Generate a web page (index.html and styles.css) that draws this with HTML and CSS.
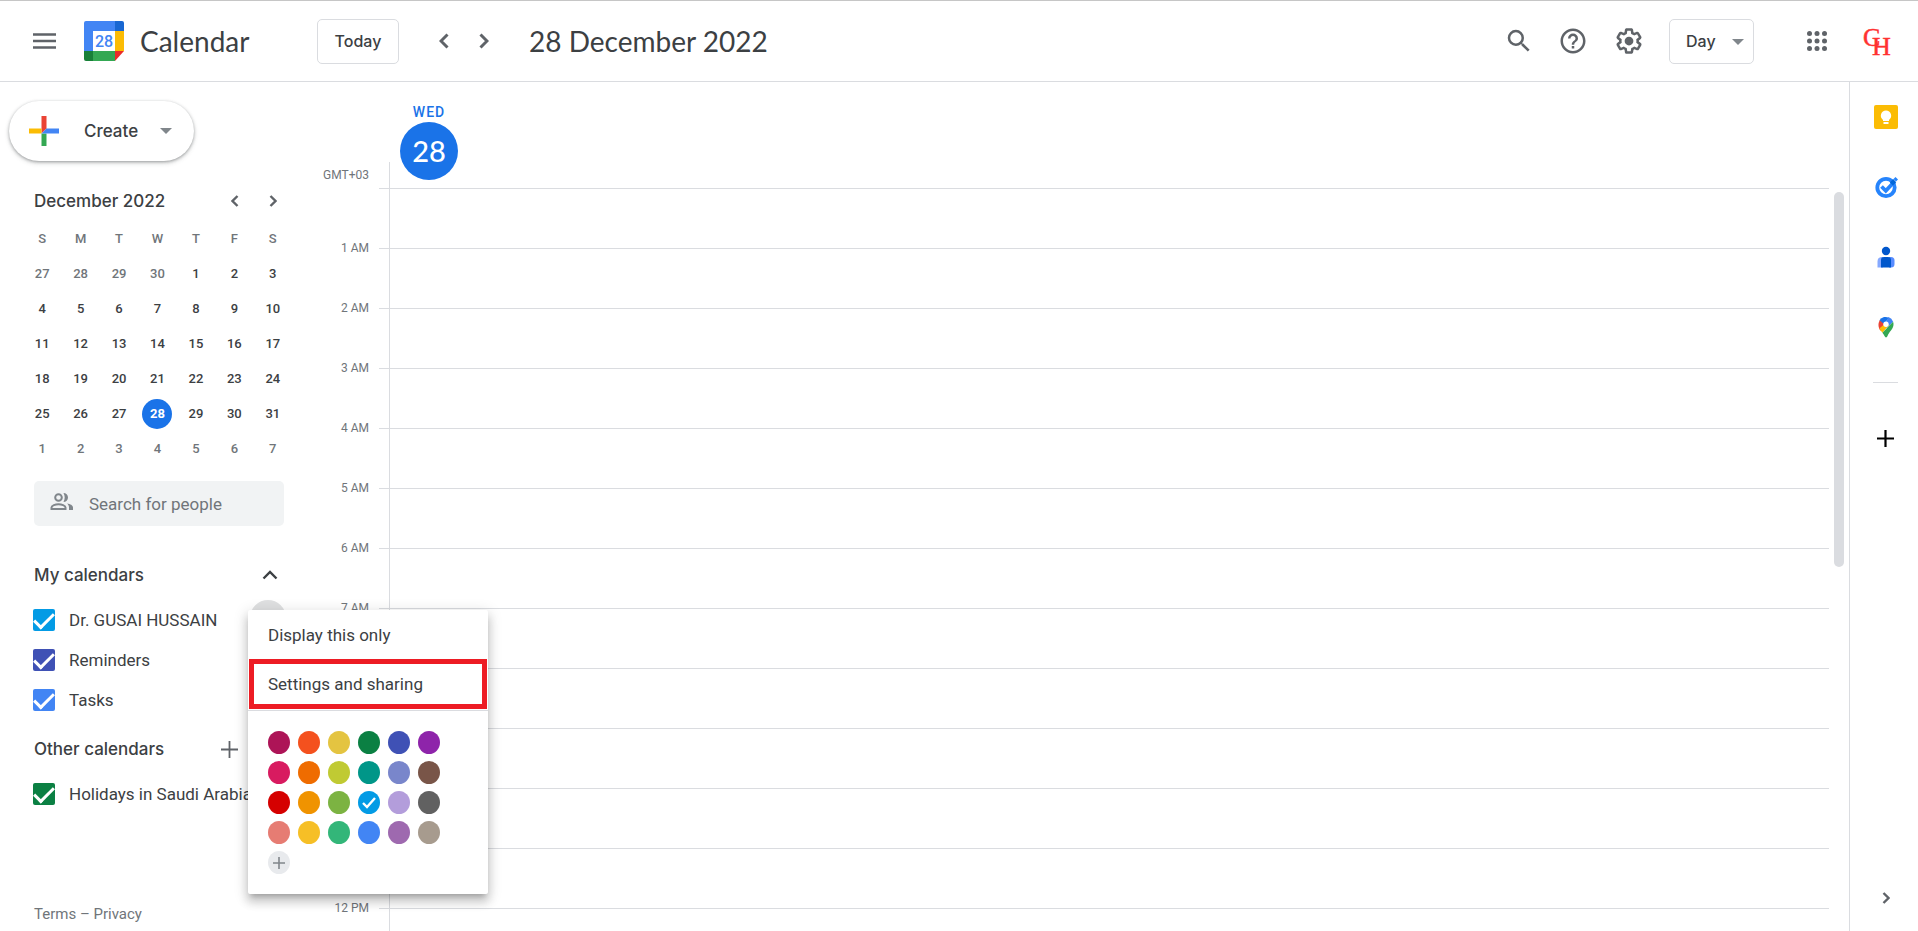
FILE: index.html
```html
<!DOCTYPE html>
<html lang="en" dir="ltr">
  <head>
    <meta charset="utf-8">
    <title>Calendar - 28 December 2022</title>
    <link rel="stylesheet" href="styles.css">
  </head>
  <body>
    <header class="topbar">
      <button class="icon-btn menu-btn" aria-label="Main menu">
        <svg width="24" height="16" viewBox="0 0 24 16"><path d="M0 1.500h23M0 8h23M0 14.500h23" stroke="#5f6368" stroke-width="2.400"/></svg>
      </button>
      <a class="brand" href="#">
        <svg class="logo" width="40" height="40" viewBox="0 0 40 40">
          <path d="M2 0h29v10H9v21H0V2a2 2 0 0 1 2-2z" fill="#4285f4"/>
          <path d="M31 0h7a2 2 0 0 1 2 2v8h-9z" fill="#1967d2"/>
          <path d="M31 10h9v20h-9z" fill="#fbbc04"/>
          <path d="M0 30h10v10H2a2 2 0 0 1-2-2z" fill="#188038"/>
          <path d="M9 30h22v10H9z" fill="#34a853"/>
          <path d="M31 30h9l-9 10z" fill="#ea2c28"/>
          <path d="M9 10h22v20H9z" fill="#fff"/>
          <text x="20" y="26" text-anchor="middle" class="logo-day">28</text>
        </svg>
        <span>Calendar</span>
      </a>
      <button class="box-btn today">Today</button>
      <div class="pager">
        <button class="icon-btn" aria-label="Previous day"><svg width="10" height="16" viewBox="0 0 10 16"><path d="M8.500 1.500L2 8l6.500 6.500" class="chev big"/></svg></button>
        <button class="icon-btn" aria-label="Next day"><svg width="10" height="16" viewBox="0 0 10 16"><path d="M1.500 1.500L8 8l-6.500 6.500" class="chev big"/></svg></button>
      </div>
      <h1 class="date">28 December 2022</h1>
      <div class="tools">
        <button class="icon-btn search-btn" aria-label="Search">
          <svg width="30" height="30" viewBox="0 0 24 24" fill="#5f6368"><path d="M15.500 14h-.79l-.28-.27A6.470 6.470 0 0 0 16 9.500 6.500 6.500 0 1 0 9.500 16c1.610 0 3.090-.59 4.230-1.570l.27.28v.79l5 4.990L20.490 19l-4.990-5zm-6 0a4.500 4.500 0 1 1 0-9 4.500 4.500 0 0 1 0 9z"/></svg>
        </button>
        <button class="icon-btn help-btn" aria-label="Help">
          <svg width="30" height="30" viewBox="0 0 24 24" fill="#5f6368"><path d="M11 18h2v-2h-2v2zm1-16C6.480 2 2 6.480 2 12s4.480 10 10 10 10-4.480 10-10S17.520 2 12 2zm0 18c-4.410 0-8-3.590-8-8s3.590-8 8-8 8 3.590 8 8-3.590 8-8 8zm0-14a4 4 0 0 0-4 4h2c0-1.100.9-2 2-2s2 .9 2 2c0 2-3 1.750-3 5h2c0-2.250 3-2.500 3-5a4 4 0 0 0-4-4z"/></svg>
        </button>
        <button class="icon-btn gear-btn" aria-label="Settings">
          <svg width="30" height="30" viewBox="0 0 24 24" fill="#5f6368"><path d="M13.850 22.250h-3.700c-.74 0-1.360-.54-1.450-1.270l-.27-1.890c-.27-.14-.53-.29-.79-.46l-1.800.72c-.7.26-1.470-.03-1.810-.65L2.200 15.530c-.35-.66-.2-1.440.36-1.880l1.530-1.190c-.01-.15-.02-.3-.02-.46 0-.15.010-.31.020-.46l-1.520-1.190c-.59-.45-.74-1.260-.37-1.880l1.850-3.190c.34-.62 1.110-.9 1.790-.63l1.810.73c.26-.17.52-.32.78-.46l.27-1.910c.09-.7.71-1.250 1.440-1.250h3.700c.74 0 1.360.54 1.450 1.270l.27 1.890c.27.14.53.29.79.46l1.800-.72c.71-.26 1.480.03 1.820.65l1.840 3.180c.36.66.2 1.440-.36 1.880l-1.520 1.190c.01.15.02.3.02.46s-.01.31-.02.46l1.520 1.190c.56.45.72 1.230.37 1.860l-1.860 3.220c-.34.62-1.110.9-1.800.63l-1.800-.72c-.26.17-.52.32-.78.46l-.27 1.910c-.1.680-.72 1.220-1.460 1.220zm-3.230-2h2.760l.37-2.550.53-.22c.44-.18.88-.44 1.340-.78l.45-.34 2.380.96 1.380-2.400-2.030-1.580.07-.56c.03-.26.06-.51.06-.78s-.03-.53-.06-.78l-.07-.56 2.030-1.580-1.390-2.400-2.390.96-.45-.35c-.42-.32-.87-.58-1.330-.77l-.52-.22-.37-2.550h-2.760l-.37 2.550-.53.210c-.44.190-.88.440-1.340.79l-.45.330-2.380-.95-1.390 2.390 2.030 1.580-.07.56a7 7 0 0 0-.06.79c0 .26.02.53.06.78l.07.56-2.030 1.580 1.380 2.400 2.390-.96.45.35c.43.330.86.580 1.330.77l.53.220.38 2.550z"/><circle cx="12" cy="12" r="3.500"/></svg>
        </button>
        <div class="view-pick">
          <select class="box-btn" aria-label="View">
            <option>Day</option>
            <option>Week</option>
            <option>Month</option>
          </select>
          <span class="caret"></span>
        </div>
        <button class="icon-btn apps-btn" aria-label="Google apps">
          <svg width="20" height="20" viewBox="0 0 20 20" fill="#5f6368"><circle cx="2.500" cy="2.500" r="2.500"/><circle cx="10" cy="2.500" r="2.500"/><circle cx="17.500" cy="2.500" r="2.500"/><circle cx="2.500" cy="10" r="2.500"/><circle cx="10" cy="10" r="2.500"/><circle cx="17.500" cy="10" r="2.500"/><circle cx="2.500" cy="17.500" r="2.500"/><circle cx="10" cy="17.500" r="2.500"/><circle cx="17.500" cy="17.500" r="2.500"/></svg>
        </button>
        <button class="icon-btn account-btn" aria-label="Account">
          <svg width="30" height="44" viewBox="0 0 30 44" class="monogram"><text x="0" y="27">C<tspan x="9" y="36">H</tspan></text></svg>
        </button>
      </div>
    </header>

    <div class="page">
      <aside class="sidebar">
        <button class="create">
          <svg width="30" height="30" viewBox="0 0 30 30"><path d="M12.500 0h5v12.500l-5 5z" fill="#ea4335"/><path d="M0 12.500h12.500v5H0z" fill="#fbbc04"/><path d="M12.500 17.500h5V30h-5z" fill="#34a853"/><path d="M17.500 12.500H30v5H12.500z" fill="#4285f4"/></svg>
          <span>Create</span>
          <span class="caret"></span>
        </button>

        <section class="mini">
          <div class="mini-head">
            <h2>December 2022</h2>
            <button class="icon-btn" aria-label="Previous month"><svg width="8" height="12" viewBox="0 0 8 12"><path d="M6.500 1L1.500 6l5 5" class="chev"/></svg></button>
            <button class="icon-btn" aria-label="Next month"><svg width="8" height="12" viewBox="0 0 8 12"><path d="M1.500 1l5 5-5 5" class="chev"/></svg></button>
          </div>
          <table>
            <thead>
              <tr><th>S</th><th>M</th><th>T</th><th>W</th><th>T</th><th>F</th><th>S</th></tr>
            </thead>
            <tbody>
              <tr><td class="out">27</td><td class="out">28</td><td class="out">29</td><td class="out">30</td><td>1</td><td>2</td><td>3</td></tr>
              <tr><td>4</td><td>5</td><td>6</td><td>7</td><td>8</td><td>9</td><td>10</td></tr>
              <tr><td>11</td><td>12</td><td>13</td><td>14</td><td>15</td><td>16</td><td>17</td></tr>
              <tr><td>18</td><td>19</td><td>20</td><td>21</td><td>22</td><td>23</td><td>24</td></tr>
              <tr><td>25</td><td>26</td><td>27</td><td><span class="now">28</span></td><td>29</td><td>30</td><td>31</td></tr>
              <tr><td class="out">1</td><td class="out">2</td><td class="out">3</td><td class="out">4</td><td class="out">5</td><td class="out">6</td><td class="out">7</td></tr>
            </tbody>
          </table>
        </section>

        <label class="people">
          <svg width="24" height="18" viewBox="0 0 24 18" fill="none" stroke="#80868b" stroke-width="2"><circle cx="8.500" cy="4.500" r="3.300"/><path d="M1.500 16v-1.500c0-2 4-3.200 7-3.200s7 1.200 7 3.200V16z"/><path d="M13.500 0a4.500 4.500 0 0 1 0 9c1.600-2.600 1.600-6.400 0-9zM17 10.500c3.400.5 6 1.800 6 4V17h-4v-2.500c0-1.700-.8-3-2-4z" fill="#80868b" stroke="none"/></svg>
          <input type="text" placeholder="Search for people" aria-label="Search for people">
        </label>

        <section class="calendars">
          <div class="cal-head">
            <h2>My calendars</h2>
            <button class="icon-btn" aria-label="Collapse"><svg width="16" height="10" viewBox="0 0 16 10"><path d="M1.500 8.500L8 2l6.500 6.500" class="chev dark"/></svg></button>
          </div>
          <ul>
            <li class="opened">
              <label><input type="checkbox" class="sky" checked>Dr. GUSAI HUSSAIN</label>
              <button class="more" aria-label="Options"></button>
              <div class="popup">
                <button class="item">Display this only</button>
                <button class="item marked">Settings and sharing</button>
                <div class="colors">
                  <button style="background:#ad1457" aria-label="Radicchio"></button>
                  <button style="background:#f4511e" aria-label="Tangerine"></button>
                  <button style="background:#e4c441" aria-label="Citron"></button>
                  <button style="background:#0b8043" aria-label="Basil"></button>
                  <button style="background:#3f51b5" aria-label="Blueberry"></button>
                  <button style="background:#8e24aa" aria-label="Grape"></button>
                  <button style="background:#d81b60" aria-label="Cherry blossom"></button>
                  <button style="background:#ef6c00" aria-label="Pumpkin"></button>
                  <button style="background:#c0ca33" aria-label="Avocado"></button>
                  <button style="background:#009688" aria-label="Eucalyptus"></button>
                  <button style="background:#7986cb" aria-label="Lavender"></button>
                  <button style="background:#795548" aria-label="Cocoa"></button>
                  <button style="background:#d50000" aria-label="Tomato"></button>
                  <button style="background:#f09300" aria-label="Mango"></button>
                  <button style="background:#7cb342" aria-label="Pistachio"></button>
                  <button style="background:#039be5" aria-label="Peacock"><svg width="14" height="12" viewBox="0 0 14 12"><path d="M1 6l4 4 8-9" fill="none" stroke="#fff" stroke-width="2.400"/></svg></button>
                  <button style="background:#b39ddb" aria-label="Wisteria"></button>
                  <button style="background:#616161" aria-label="Graphite"></button>
                  <button style="background:#e67c73" aria-label="Flamingo"></button>
                  <button style="background:#f6bf26" aria-label="Banana"></button>
                  <button style="background:#33b679" aria-label="Sage"></button>
                  <button style="background:#4285f4" aria-label="Cobalt"></button>
                  <button style="background:#9e69af" aria-label="Amethyst"></button>
                  <button style="background:#a79b8e" aria-label="Birch"></button>
                  <button class="custom" aria-label="Add custom color"><svg width="12" height="12" viewBox="0 0 12 12"><path d="M6 0v12M0 6h12" stroke="#80868b" stroke-width="1.600"/></svg></button>
                </div>
              </div>
            </li>
            <li><label><input type="checkbox" class="indigo" checked>Reminders</label></li>
            <li><label><input type="checkbox" class="blue" checked>Tasks</label></li>
          </ul>
          <div class="cal-head other">
            <h2>Other calendars</h2>
            <button class="icon-btn" aria-label="Add other calendars"><svg width="17" height="17" viewBox="0 0 17 17"><path d="M8.500 0v17M0 8.500h17" stroke="#5f6368" stroke-width="1.800"/></svg></button>
          </div>
          <ul>
            <li><label><input type="checkbox" class="green" checked>Holidays in Saudi Arabia</label></li>
          </ul>
        </section>

        <footer><a href="#">Terms</a> – <a href="#">Privacy</a></footer>
      </aside>

      <main class="day-view">
        <div class="day-head">
          <span class="zone">GMT+03</span>
          <div class="stub"></div>
          <div class="day">
            <span>WED</span>
            <strong>28</strong>
          </div>
        </div>
        <div class="scroller">
          <div class="hours">
            <div class="hour"><span></span><div></div></div>
            <div class="hour"><span>1 AM</span><div></div></div>
            <div class="hour"><span>2 AM</span><div></div></div>
            <div class="hour"><span>3 AM</span><div></div></div>
            <div class="hour"><span>4 AM</span><div></div></div>
            <div class="hour"><span>5 AM</span><div></div></div>
            <div class="hour"><span>6 AM</span><div></div></div>
            <div class="hour"><span>7 AM</span><div></div></div>
            <div class="hour"><span>8 AM</span><div></div></div>
            <div class="hour"><span>9 AM</span><div></div></div>
            <div class="hour"><span>10 AM</span><div></div></div>
            <div class="hour"><span>11 AM</span><div></div></div>
            <div class="hour"><span>12 PM</span><div></div></div>
          </div>
          <div class="track"><div class="thumb"></div></div>
        </div>
      </main>

      <nav class="rail">
        <a href="#" aria-label="Keep"><svg width="24" height="24" viewBox="0 0 24 24"><rect width="24" height="24" rx="2" fill="#fbbc04"/><path d="M12 5.500a5.200 5.200 0 0 0-3 9.400V16h6v-1.100a5.200 5.200 0 0 0-3-9.400zM9.500 17h5v2h-5z" fill="#fff"/></svg></a>
        <a href="#" aria-label="Tasks"><svg width="24" height="24" viewBox="0 0 24 24"><circle cx="12" cy="12.500" r="8.700" fill="none" stroke="#2684fc" stroke-width="3.800"/><path d="M7.500 11.500l4.300 4.300 8.500-9" fill="none" stroke="#2684fc" stroke-width="3.800"/><path d="M15.800 7.600l3.400-3.500 3 3.100-3.300 3.400z" fill="#0066da"/><path d="M19.500 4l2-2 2.500 2.500-2 2z" fill="#2684fc"/></svg></a>
        <a href="#" aria-label="Contacts"><svg width="24" height="24" viewBox="0 0 24 24"><circle cx="12" cy="6" r="4.200" fill="#0057cc"/><path d="M7.500 12H9v10.500H3.500v-6A4.500 4.500 0 0 1 7.500 12z" fill="#86a9ff"/><path d="M15 12h2a3.500 3.500 0 0 1 3.500 3.500V19a3.500 3.500 0 0 1-3.500 3.500h-2z" fill="#578cff"/><path d="M10 12h4a3 3 0 0 1 3 3v7.500H7V15a3 3 0 0 1 3-3z" fill="#0057cc"/></svg></a>
        <a href="#" aria-label="Maps"><svg width="24" height="24" viewBox="0 0 24 24"><path d="M6.200 4.400L12 9l-5.500 6.800C4.300 13 3.500 8 6.200 4.400z" fill="#ea4335"/><path d="M10 2a7.600 7.600 0 0 0-4.500 3.300L10 9l5-6.200A8 8 0 0 0 10 2z" fill="#1a73e8"/><path d="M14.500 2a7.800 7.800 0 0 1 4.600 4.700L13 13l-2-4.500z" fill="#4285f4"/><path d="M5.500 13.200c.6 1.500 1.700 3 2.900 4.500L15 10l-3-2z" fill="#fbbc04"/><path d="M19.100 6.700c1.700 5.200-2 8.300-4 11.200-1.600 2.300-1.600 4.100-3.100 4.600-1.200-.3-1.500-2.200-3.600-4.800z" fill="#34a853"/><circle cx="12" cy="9.200" r="2.700" fill="#fff"/></svg></a>
        <hr>
        <button class="icon-btn" aria-label="Get add-ons"><svg width="17" height="17" viewBox="0 0 17 17"><path d="M8.500 0v17M0 8.500h17" stroke="#000" stroke-width="2.200"/></svg></button>
        <button class="icon-btn hide-rail" aria-label="Hide side panel"><svg width="8" height="12" viewBox="0 0 8 12"><path d="M1.500 1l5 5-5 5" class="chev"/></svg></button>
      </nav>
    </div>
  </body>
</html>
```
FILE: styles.css
```css
*{
  box-sizing: border-box;
}
body{
  margin: 0;
  height: 100vh;
  display: flex;
  flex-direction: column;
  overflow: hidden;
  font: 17px/24px Roboto, sans-serif;
  color: #3c4043;
  background: #fff;
}
button{
  border: 0;
  padding: 0;
  background: none;
  font: inherit;
  color: inherit;
  cursor: pointer;
}
a{
  color: inherit;
  text-decoration: none;
}
h1, h2, ul{
  margin: 0;
  padding: 0;
  list-style: none;
}
svg{
  display: block;
}
.icon-btn{
  width: 40px;
  height: 40px;
  flex: none;
  display: flex;
  align-items: center;
  justify-content: center;
}
.chev{
  fill: none;
  stroke: #5f6368;
  stroke-width: 2.4;
}
.big{
  stroke-width: 3;
}
.dark{
  stroke: #3c4043;
}
.caret{
  width: 0;
  border: 6px solid transparent;
  border-top-color: #80868b;
  border-bottom: 0;
}

/* top bar */
.topbar{
  flex: none;
  height: 82px;
  display: flex;
  align-items: center;
  padding: 0 20px 0 25px;
  border-top: 1px solid #c6c6c6;
  border-bottom: 1px solid #dadce0;
}
.brand{
  display: flex;
  align-items: center;
  gap: 16px;
  width: 233px;
  margin-left: 19px;
  font: 28px/36px Lato, sans-serif;
}
.logo-day{
  font: 500 16px Roboto, sans-serif;
  fill: #4285f4;
}
.box-btn{
  height: 45px;
  border: 1px solid #dadce0;
  border-radius: 5px;
  background: #fff;
  font: 500 16px/24px Inter, sans-serif;
  color: #3c4043;
}
.today{
  width: 82px;
}
.pager{
  display: flex;
  margin-left: 25px;
}
.date{
  margin-left: 25px;
  font: 28px/36px Lato, sans-serif;
}
.tools{
  display: flex;
  align-items: center;
  margin-left: auto;
}
.help-btn{
  margin-left: 14px;
}
.gear-btn{
  margin: 0 20px 0 16px;
}
.view-pick{
  position: relative;
}
.view-pick select{
  appearance: none;
  width: 85px;
  padding: 0 16px;
}
.view-pick .caret{
  position: absolute;
  right: 10px;
  top: 20px;
  pointer-events: none;
}
.apps-btn{
  margin: 0 21px 0 43px;
}
.monogram text{
  font: 26px "Liberation Serif", serif;
  fill: #ff3131;
  stroke: #ff3131;
  stroke-width: .5;
}

.page{
  flex: 1;
  min-height: 0;
  display: flex;
}

/* left column */
.sidebar{
  flex: none;
  width: 309px;
  display: flex;
  flex-direction: column;
  padding: 19px 25px 0 34px;
}
.create{
  flex: none;
  align-self: flex-start;
  display: flex;
  align-items: center;
  height: 60px;
  width: 185px;
  margin-left: -25px;
  padding: 0 22px 0 20px;
  border-radius: 30px;
  box-shadow: 0 1px 3px rgba(60,64,67,.4), 0 2px 5px rgba(60,64,67,.2);
  font: 500 17px/24px Inter, sans-serif;
}
.create span:nth-child(2){
  margin: 0 auto 0 25px;
}
h2{
  font: 500 17px/24px Inter, sans-serif;
}
.mini-head{
  display: flex;
  align-items: center;
  margin: 20px -8px 0 0;
}
.mini-head h2{
  margin-right: auto;
}
.mini-head .icon-btn{
  width: 38px;
}
.mini table{
  table-layout: fixed;
  width: 269px;
  margin: 0 0 0 -11px;
  border-collapse: collapse;
}
.mini th, .mini td{
  height: 35px;
  padding: 0;
  text-align: center;
  font: 500 13px/20px Roboto, sans-serif;
}
.mini th, .mini .out{
  color: #70757a;
}
.now{
  display: block;
  width: 30px;
  margin: 0 auto;
  border-radius: 50%;
  background: #1a73e8;
  color: #fff;
  font-weight: 700;
  line-height: 30px;
}
.people{
  flex: none;
  display: flex;
  align-items: center;
  gap: 15px;
  height: 45px;
  margin-top: 15px;
  padding: 0 16px;
  border-radius: 5px;
  background: #f1f3f4;
}
.people svg{
  flex: none;
  margin-bottom: 4px;
}
.people input{
  width: 100%;
  min-width: 0;
  border: 0;
  padding: 0;
  outline: 0;
  background: none;
  font: inherit;
}
.people input::placeholder{
  color: #70757a;
  opacity: 1;
}
.cal-head{
  display: flex;
  align-items: center;
  justify-content: space-between;
  margin: 29px -6px 5px 0;
}
.cal-head.other{
  margin: 9px 35px 5px 0;
}
.calendars li{
  display: flex;
  height: 40px;
  align-items: center;
}
.calendars label{
  display: flex;
  align-items: center;
  white-space: nowrap;
}
.calendars input{
  appearance: none;
  width: 22px;
  height: 22px;
  margin: 0 14px 0 -1px;
  border-radius: 2px;
  display: flex;
  align-items: center;
  justify-content: center;
}
.calendars input::after{
  content: "";
  width: 17px;
  height: 8px;
  margin-bottom: 4px;
  border: solid #fff;
  border-width: 0 0 3px 3px;
  transform: rotate(-45deg);
}
.sky{
  background: #039be5;
}
.indigo{
  background: #3f51b5;
}
.blue{
  background: #4285f4;
}
.green{
  background: #0b8043;
}
.opened{
  position: relative;
}
.more{
  position: absolute;
  left: 216px;
  top: 0;
  width: 36px;
  height: 36px;
  border-radius: 50%;
  background: #dfe0e1;
}
footer{
  margin: auto 0 5px;
  font-size: 15px;
  color: #70757a;
}

/* options of one calendar, opens over the page */
.popup{
  position: absolute;
  z-index: 2;
  left: 214px;
  top: 10px;
  width: 240px;
  padding-bottom: 20px;
  border-radius: 2px;
  background: #fff;
  box-shadow: 0 8px 10px 1px rgba(0,0,0,.14), 0 3px 14px 2px rgba(0,0,0,.12), 0 5px 5px -3px rgba(0,0,0,.2);
}
.item{
  display: block;
  width: 100%;
  height: 49px;
  padding: 0 20px;
  text-align: left;
}
.item.marked{
  width: 238px;
  height: 50px;
  margin: 0 1px 1px;
  padding: 0 14px;
  border: 5px solid #ed1c24;
}
.colors{
  display: grid;
  grid-template-columns: repeat(6, 22px);
  gap: 7px 8px;
  padding: 20px 20px 0;
  border-top: 1px solid #dadce0;
}
.colors button{
  height: 23px;
  border-radius: 50%;
  display: flex;
  align-items: center;
  justify-content: center;
}
.colors .custom{
  background: #e8eaed;
}

/* day grid */
.day-view{
  flex: 1;
  min-width: 0;
  display: flex;
  flex-direction: column;
}
.day-head{
  flex: none;
  display: flex;
  align-items: flex-end;
  height: 106px;
}
.zone, .hour span{
  flex: none;
  width: 60px;
  margin-right: 10px;
  text-align: right;
  font-size: 12px;
  line-height: 16px;
  color: #70757a;
}
.zone{
  margin-bottom: 5px;
}
.stub{
  height: 26px;
  margin-left: 10px;
  border-left: 1px solid #dadce0;
}
.day{
  display: flex;
  flex-direction: column;
  width: 58px;
  margin: 0 0 8px 10px;
  text-align: center;
  color: #1a73e8;
}
.day span{
  font: 500 14px/20px Roboto, sans-serif;
  letter-spacing: 1px;
}
.day strong{
  border-radius: 50%;
  background: #1a73e8;
  color: #fff;
  font: 500 29px/58px Lato, sans-serif;
}
.scroller{
  flex: 1;
  min-height: 0;
  display: flex;
}
.hours{
  flex: 1;
}
.hour{
  display: flex;
  height: 60px;
}
.hour span{
  margin-top: -8px;
}
.hour div{
  flex: 1;
  padding-left: 10px;
  border-top: 1px solid #dadce0;
}
.hour div::before{
  content: "";
  display: block;
  height: 100%;
  border-left: 1px solid #dadce0;
}
.track{
  width: 20px;
  padding: 4px 5px;
}
.thumb{
  height: 51%;
  border-radius: 5px;
  background: #dadce0;
}

/* right rail */
.rail{
  flex: none;
  width: 69px;
  display: flex;
  flex-direction: column;
  align-items: center;
  gap: 46px;
  padding: 23px 0 13px 3px;
  border-left: 1px solid #dadce0;
}
.rail hr{
  width: 25px;
  margin: -3px 0 -11px;
  border: 0;
  border-top: 1px solid #dadce0;
}
.hide-rail{
  margin-top: auto;
}
```
